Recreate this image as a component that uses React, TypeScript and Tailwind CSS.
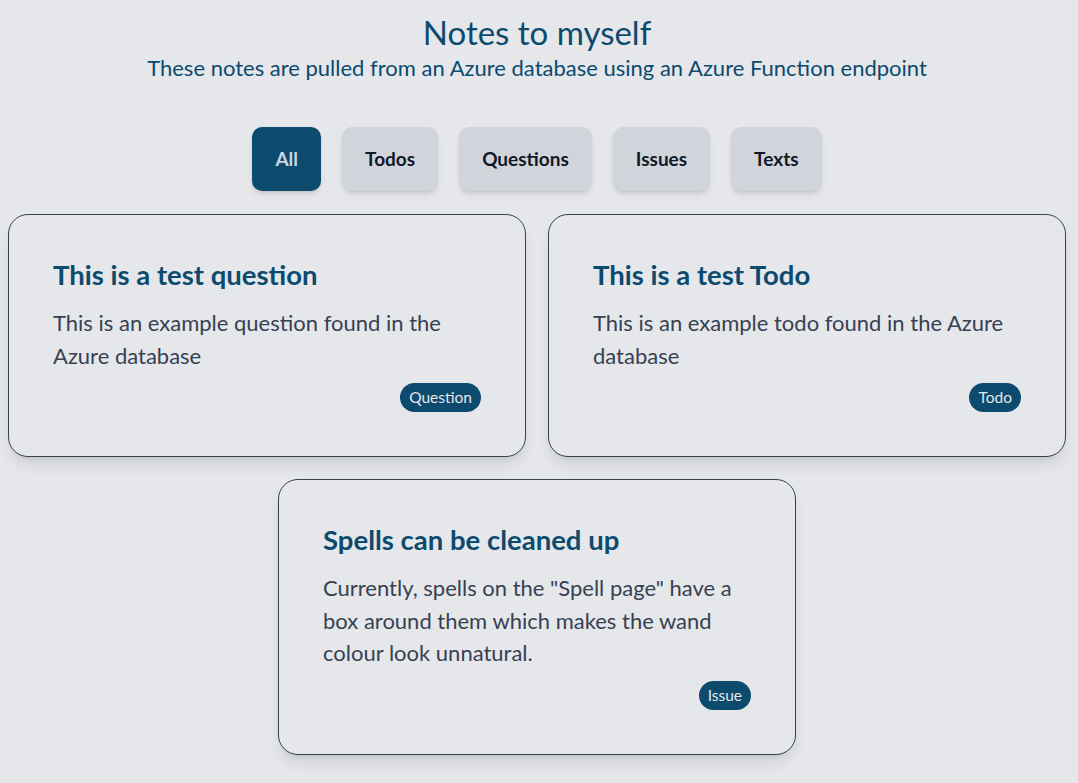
import { useState } from 'react';

const filters = ['All', 'Todos', 'Questions', 'Issues', 'Texts'];

const notes = [
	{
		title: 'This is a test question',
		body: 'This is an example question found in the Azure database',
		tag: 'Question',
	},
	{
		title: 'This is a test Todo',
		body: 'This is an example todo found in the Azure database',
		tag: 'Todo',
	},
	{
		title: 'Spells can be cleaned up',
		body: 'Currently, spells on the "Spell page" have a box around them which makes the wand colour look unnatural.',
		tag: 'Issue',
	},
];

export default function App() {
	const [active, setActive] = useState('All');

	return (
		<div
			className="min-h-screen bg-[#e5e7eb] pl-[7px] pr-[11px] pt-[12px] pb-8"
			style={{ fontFamily: 'Lato, "Noto Sans", sans-serif' }}
		>
			{/* Header */}
			<div className="text-center text-[#0c4a6e]">
				<h1 className="text-[33px] leading-[40px]">Notes to myself</h1>
				<p className="text-[22px] leading-[32px]">
					These notes are pulled from an Azure database using an Azure Function endpoint
				</p>
			</div>

			{/* Filters */}
			<div className="mt-[43px] flex justify-center gap-[21px]">
				{filters.map((f) => (
					<button
						key={f}
						onClick={() => setActive(f)}
						className={
							f === active
								? 'h-16 rounded-[10px] bg-[#0c4a6e] px-[23px] text-[19px] font-bold text-[#cbd5e1] shadow-md'
								: 'h-16 rounded-[10px] bg-[#d1d5db] px-[23px] text-[19px] font-bold text-[#111827] shadow-md'
						}
					>
						{f}
					</button>
				))}
			</div>

			{/* Notes */}
			<div className="mt-[23px] flex flex-wrap justify-center gap-[22px]">
				{notes.map((n) => (
					<div
						key={n.title}
						className="flex w-[518px] flex-col rounded-[20px] border border-[#374151] bg-[#e5e7eb] px-11 pt-11 pb-[44px] shadow-lg"
					>
						<h2 className="text-[27.5px] font-bold leading-8 text-[#0c4a6e]">{n.title}</h2>
						<p className="mt-4 text-[22px] leading-[32.5px] text-[#374151]">{n.body}</p>
						<div className="mt-[11px] flex justify-end">
							<span className="rounded-full bg-[#0c4a6e] px-[9px] text-[15.5px] leading-[29px] text-[#e5e7eb]">
								{n.tag}
							</span>
						</div>
					</div>
				))}
			</div>
		</div>
	);
}
